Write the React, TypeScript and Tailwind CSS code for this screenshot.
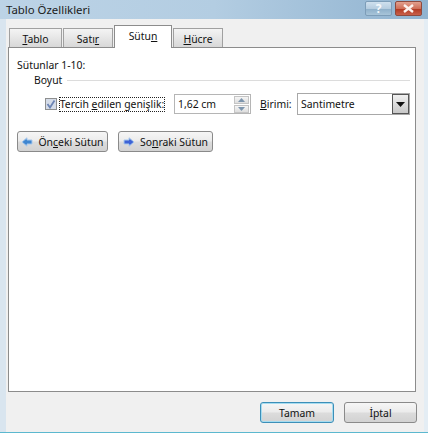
import React from "react";

function Tab({ active, children }: { active?: boolean; children: React.ReactNode }) {
  if (active) {
    return (
      <div className="relative z-10 -mb-px flex h-[23px] w-[58px] items-start justify-center border border-b-0 border-[#8c8c8c] bg-white pt-[3px]">
        {children}
      </div>
    );
  }
  return (
    <div className="flex h-[19px] items-center justify-center border border-b-0 border-[#a0a0a0] bg-gradient-to-b from-[#f4f4f4] to-[#d8d8d8] pt-[1px]">
      {children}
    </div>
  );
}

function Btn({ w, h, cls, children }: { w: string; h: string; cls?: string; children: React.ReactNode }) {
  return (
    <div className={`flex items-center justify-center rounded-[3px] border ${w} ${h} ${cls ?? "border-[#8a8a8a]"} bg-[linear-gradient(#f6f6f6_0%,#ebebeb_48%,#dcdcdc_52%,#d2d2d2_100%)]`}>
      {children}
    </div>
  );
}

function Arrow({ dir }: { dir: "left" | "right" }) {
  return (
    <svg width="12" height="10" viewBox="0 0 12 10">
      <path
        d={dir === "left" ? "M1 5 6 0.8V3H11V7H6V9.2Z" : "M11 5 6 0.8V3H1V7H6V9.2Z"}
        fill={dir === "left" ? "#3f86d0" : "#3c62d6"}
        stroke="#a9c9ec"
        strokeWidth="1"
      />
    </svg>
  );
}

export default function App() {
  return (
    <div
      className="flex h-[433px] w-[428px] flex-col overflow-hidden border-b border-b-[#5cb8cf] bg-[#f0f0f0] text-[10.4px] leading-[14px] text-[#111]"
      style={{ fontFamily: '"Noto Sans", "Liberation Sans", sans-serif' }}
    >
      <div className="flex h-[19px] shrink-0 items-center justify-between bg-gradient-to-r from-[#bcd3e6] via-[#b3cde2] to-[#90b3d0] pl-[6px] pr-[6px]">
        <span className="text-[11.4px] text-[#1c1c1c]">Tablo Özellikleri</span>
        <div className="flex gap-[3px] self-start pt-[1px]">
          <div className="flex h-[15px] w-[27px] items-center justify-center rounded-[2px] border border-[#7d9db8] bg-[linear-gradient(#cfe0ee_0%,#b6cde0_50%,#8eb0ca_55%,#a8c4d9_100%)] text-[12px] font-bold leading-none text-[#f4f8fb]">
            ?
          </div>
          <div className="flex h-[15px] w-[27px] items-center justify-center rounded-[2px] border border-[#8e4a3e] bg-[linear-gradient(#e2a08e_0%,#cf6f58_50%,#b23a22_55%,#c8604a_100%)]">
            <svg width="13" height="9" viewBox="0 0 13 9">
              <path d="M2 1 11 8M11 1 2 8" stroke="#fdf3ef" strokeWidth="2.4" />
            </svg>
          </div>
        </div>
      </div>
      <div className="flex min-h-0 flex-1 border-l-[6px] border-r-[4px] border-l-[#d9e5ef] border-r-[#e4edf4]">
        <div className="flex min-w-0 flex-1 flex-col pl-[2px] pr-[8px]">
          <div className="flex h-[28px] shrink-0 items-end gap-[1px] pl-[1px]">
            <div className="w-[53px]">
              <Tab><span><u>T</u>ablo</span></Tab>
            </div>
            <div className="w-[50px]">
              <Tab>Satı<u>r</u></Tab>
            </div>
            <Tab active>Sütu<u>n</u></Tab>
            <div className="w-[50px]">
              <Tab><span><u>H</u>ücre</span></Tab>
            </div>
          </div>
          <div className="flex h-[345px] shrink-0 flex-col border border-[#8c8c8c] bg-white pl-[8px] pr-[5px]">
            <div className="pt-[10px]">Sütunlar 1-10:</div>
            <div className="mt-[1px] flex items-center gap-[5px] pl-[17px]">
              <span>Boyut</span>
              <div className="h-px flex-1 bg-[#dcdcdc]" />
            </div>
            <div className="mt-[6px] flex items-center pl-[28px]">
              <div className="flex h-[12px] w-[12px] items-center justify-center border border-[#8e8f8f] bg-[#d5dce8]">
                <svg width="10" height="10" viewBox="0 0 10 10">
                  <path d="M1.5 5 4 8.5 8.5 1.5" fill="none" stroke="#6c84b4" strokeWidth="1.8" />
                </svg>
              </div>
              <div className="ml-[2px] flex h-[15px] w-[106px] items-center justify-center border border-dotted border-[#222]">
                <span className="whitespace-nowrap">Tercih <u>e</u>dilen genişlik:</span>
              </div>
              <div className="ml-[9px] flex h-[20px] w-[77px] items-center justify-between border border-[#b5b5b5] pl-[3px] pr-[1px]">
                <span>1,62 cm</span>
                <div className="flex flex-col gap-[1px]">
                  <div className="flex h-[8px] w-[15px] items-center justify-center border border-[#c4c4c4] bg-gradient-to-b from-[#f5f5f5] to-[#dedede]">
                    <svg width="7" height="4" viewBox="0 0 7 4"><path d="M3.5 0 7 4H0Z" fill="#7d95ad" /></svg>
                  </div>
                  <div className="flex h-[8px] w-[15px] items-center justify-center border border-[#c4c4c4] bg-gradient-to-b from-[#f5f5f5] to-[#dedede]">
                    <svg width="7" height="4" viewBox="0 0 7 4"><path d="M3.5 4 7 0H0Z" fill="#7d95ad" /></svg>
                  </div>
                </div>
              </div>
              <span className="ml-[9px] w-[28px] whitespace-nowrap"><u>B</u>irimi:</span>
              <div className="ml-[9px] flex h-[22px] w-[113px] items-center justify-between border border-[#a8a8a8] pl-[3px] pr-0">
                <span>Santimetre</span>
                <div className="flex h-[20px] w-[17px] items-center justify-center border border-[#555] bg-gradient-to-b from-[#f0f0f0] to-[#c8c8c8]">
                  <svg width="9" height="5" viewBox="0 0 9 5"><path d="M0 0H9L4.5 5Z" fill="#111" /></svg>
                </div>
              </div>
            </div>
            <div className="mt-[16px] flex gap-[10px]">
              <Btn w="w-[91px]" h="h-[21px]">
                <div className="flex items-center gap-[5px] whitespace-nowrap">
                  <Arrow dir="left" />
                  <span>Ön<u>c</u>eki Sütun</span>
                </div>
              </Btn>
              <Btn w="w-[95px]" h="h-[21px]">
                <div className="flex items-center gap-[5px] whitespace-nowrap">
                  <Arrow dir="right" />
                  <span>So<u>n</u>raki Sütun</span>
                </div>
              </Btn>
            </div>
          </div>
          <div className="-mr-px flex flex-1 justify-end gap-[10px] pt-[10px]">
            <Btn w="w-[74px]" h="h-[21px]" cls="border-[#3c8fb8] shadow-[inset_0_0_0_1px_#a6dcf0]">Tamam</Btn>
            <Btn w="w-[73px]" h="h-[21px]">İptal</Btn>
          </div>
        </div>
      </div>
    </div>
  );
}
